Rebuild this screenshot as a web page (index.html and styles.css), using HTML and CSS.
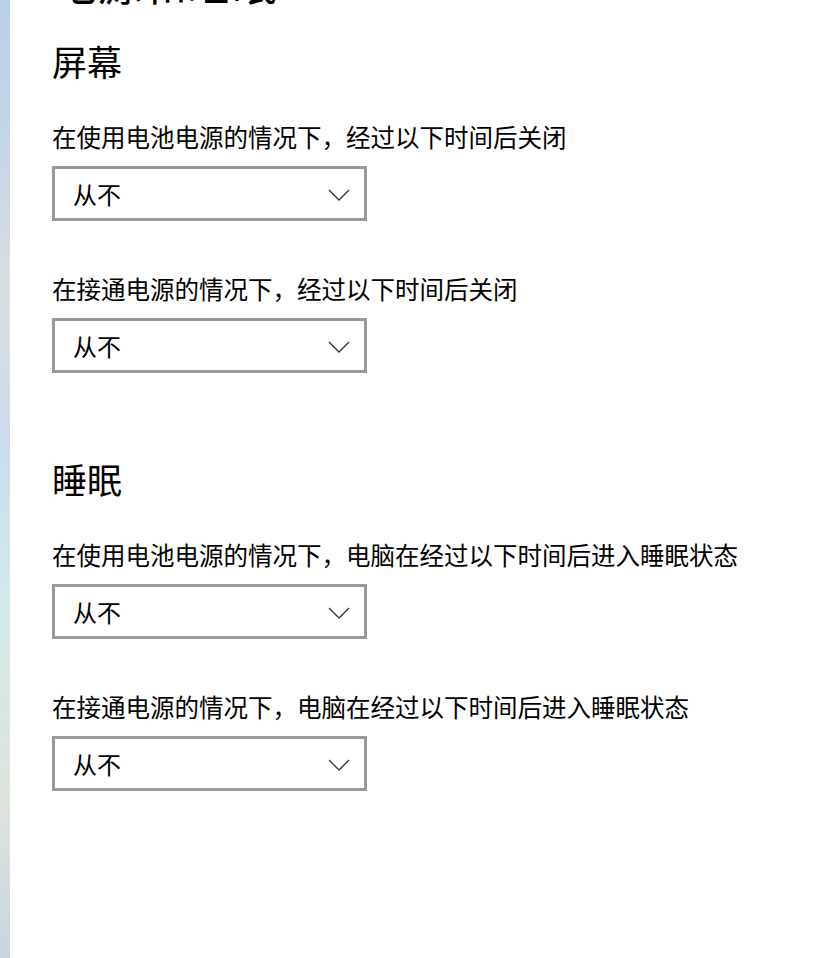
FILE: index.html
```html
<html lang="zh-CN">
    <head>
        <meta charset="UTF-8">
        <title>电源和睡眠</title>
        <link rel="stylesheet" href="styles.css">
    </head>
    <body>
        <!--desktop wallpaper edge-->
        <div class="wallpaper"></div>

        <!--settings page-->
        <div class="page">
            <h1 class="page-title">电源和睡眠</h1>

            <h2 class="section-title first">屏幕</h2>
            <div class="setting">
                <div class="setting-label">在使用电池电源的情况下，经过以下时间后关闭</div>
                <div class="combo">
                    <span class="combo-value">从不</span>
                    <svg class="chevron" width="22" height="12" viewBox="0 0 22 12"><path d="M1 1 L11 11 L21 1" fill="none" stroke="#333" stroke-width="1.3"/></svg>
                </div>
            </div>
            <div class="setting">
                <div class="setting-label">在接通电源的情况下，经过以下时间后关闭</div>
                <div class="combo">
                    <span class="combo-value">从不</span>
                    <svg class="chevron" width="22" height="12" viewBox="0 0 22 12"><path d="M1 1 L11 11 L21 1" fill="none" stroke="#333" stroke-width="1.3"/></svg>
                </div>
            </div>

            <h2 class="section-title">睡眠</h2>
            <div class="setting">
                <div class="setting-label">在使用电池电源的情况下，电脑在经过以下时间后进入睡眠状态</div>
                <div class="combo">
                    <span class="combo-value">从不</span>
                    <svg class="chevron" width="22" height="12" viewBox="0 0 22 12"><path d="M1 1 L11 11 L21 1" fill="none" stroke="#333" stroke-width="1.3"/></svg>
                </div>
            </div>
            <div class="setting">
                <div class="setting-label">在接通电源的情况下，电脑在经过以下时间后进入睡眠状态</div>
                <div class="combo">
                    <span class="combo-value">从不</span>
                    <svg class="chevron" width="22" height="12" viewBox="0 0 22 12"><path d="M1 1 L11 11 L21 1" fill="none" stroke="#333" stroke-width="1.3"/></svg>
                </div>
            </div>
        </div>
    </body>
</html>
```

FILE: styles.css
```css
body {
    margin: 0;
    padding: 0;
    display: flex;
    height: 958px;
    overflow: hidden;
    background-color: #fff;
    color: #000;
    font-family: "Microsoft YaHei", "Noto Sans CJK SC", "Noto Sans", sans-serif;
}

/*strip of the desktop showing on the left*/
.wallpaper {
    width: 10px;
    flex-shrink: 0;
    background: linear-gradient(to bottom,
        #b9d0e9 0%,
        #c6d6e7 16%,
        #d9dee1 30%,
        #ccdcec 46%,
        #d3e8ec 62%,
        #d6e8e1 72%,
        #dfe3dd 84%,
        #c6d6e0 100%);
}

.page {
    flex-grow: 1;
    padding-left: 42px;
    display: flex;
    flex-direction: column;
}

.page-title {
    font-size: 45px;
    font-weight: 400;
    line-height: 60px;
    margin: -48px 0 0 0;
    white-space: nowrap;
}

.section-title {
    font-size: 35px;
    font-weight: 400;
    line-height: 46px;
    margin: 30px 0 38px 0; /*flex column, margins don't collapse*/
}

.section-title.first {
    margin-top: 26px;
}

.setting {
    display: flex;
    flex-direction: column;
    align-items: flex-start;
    margin-bottom: 53px;
}

.setting-label {
    font-size: 24.5px;
    line-height: 30px;
    margin-bottom: 14px;
    white-space: nowrap;
}

/*dropdown box*/
.combo {
    box-sizing: border-box;
    width: 315px;
    height: 55px;
    border: 3px solid #999;
    background-color: #fff;
    display: flex;
    align-items: center;
    justify-content: space-between;
    padding: 0 14px 0 18px;
}

.combo-value {
    font-size: 24px;
    line-height: 30px;
}

.chevron {
    display: block;
    margin-top: 2px;
}
```
